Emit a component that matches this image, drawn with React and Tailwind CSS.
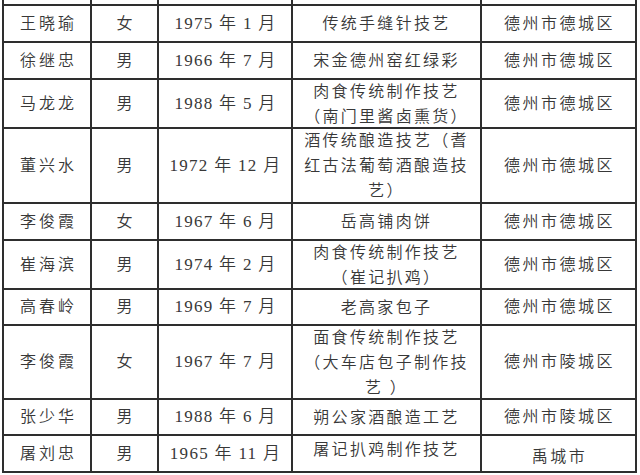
const rows = [
  { h: 37, name: "王晓瑜", sex: "女", date: "1975 年 1 月", item: ["传统手缝针技艺"], area: "德州市德城区" },
  { h: 37, name: "徐继忠", sex: "男", date: "1966 年 7 月", item: ["宋金德州窑红绿彩"], area: "德州市德城区" },
  { h: 49, name: "马龙龙", sex: "男", date: "1988 年 5 月", item: ["肉食传统制作技艺", "（南门里酱卤熏货）"], area: "德州市德城区" },
  { h: 75, name: "董兴水", sex: "男", date: "1972 年 12 月", item: ["酒传统酿造技艺（耆", "红古法葡萄酒酿造技", "艺）"], area: "德州市德城区" },
  { h: 37, name: "李俊霞", sex: "女", date: "1967 年 6 月", item: ["岳高铺肉饼"], area: "德州市德城区" },
  { h: 49, name: "崔海滨", sex: "男", date: "1974 年 2 月", item: ["肉食传统制作技艺", "（崔记扒鸡）"], area: "德州市德城区" },
  { h: 36, name: "高春岭", sex: "男", date: "1969 年 7 月", item: ["老高家包子"], area: "德州市德城区" },
  { h: 74, name: "李俊霞", sex: "女", date: "1967 年 7 月", item: ["面食传统制作技艺", "（大车店包子制作技", "艺 ）"], area: "德州市陵城区" },
  { h: 36, name: "张少华", sex: "男", date: "1988 年 6 月", item: ["朔公家酒酿造工艺"], area: "德州市陵城区" },
  { h: 37, name: "屠刘忠", sex: "男", date: "1965 年 11 月", item: ["屠记扒鸡制作技艺"], area: "禹城市", last: true },
];

const heights = {
  37: "h-[37px]",
  36: "h-[36px]",
  49: "h-[49px]",
  75: "h-[75px]",
  74: "h-[74px]",
};

const cell = "flex items-center justify-center border-r-2 border-[#2e2e2e] text-center";

export default function App() {
  return (
    <div
      className="w-[640px] h-[475px] bg-white overflow-hidden text-[#383838] font-[350]"
      style={{ fontFamily: '"Liberation Serif", "Noto Sans CJK SC", serif' }}
    >
      <div className="ml-[2px] w-[635px] border-l-2 border-[#2e2e2e]">
        <div className="flex h-[6px] border-b-2 border-[#2e2e2e]">
          <div className="w-[88px] border-r-2 border-[#2e2e2e]" />
          <div className="w-[67px] border-r-2 border-[#2e2e2e]" />
          <div className="w-[134px] border-r-2 border-[#2e2e2e]" />
          <div className="w-[189px] border-r-2 border-[#2e2e2e]" />
          <div className="w-[155px] border-r-2 border-[#2e2e2e]" />
        </div>
        {rows.map((r, i) => (
          <div key={i} className={`flex border-b-2 border-[#2e2e2e] ${heights[r.h]}`}>
            <div className={`${cell} w-[88px] text-[16px] tracking-[3px] pl-[3px]`}>{r.name}</div>
            <div className={`${cell} w-[67px] text-[16px]`}>{r.sex}</div>
            <div className={`${cell} w-[134px] text-[17px] tracking-[1.3px] pl-[1px]`}>{r.date}</div>
            <div className={`${cell} w-[189px] text-[16px] tracking-[2.3px] leading-[25px] flex-col ${r.last ? "pb-[8px]" : ""}`}>
              {r.item.map((t, j) => (
                <div key={j} className="whitespace-nowrap">{t}</div>
              ))}
            </div>
            <div className={`${cell} w-[155px] text-[16px] tracking-[2.5px] pl-[2px] ${r.last ? "pt-[6px]" : ""}`}>{r.area}</div>
          </div>
        ))}
      </div>
    </div>
  );
}
